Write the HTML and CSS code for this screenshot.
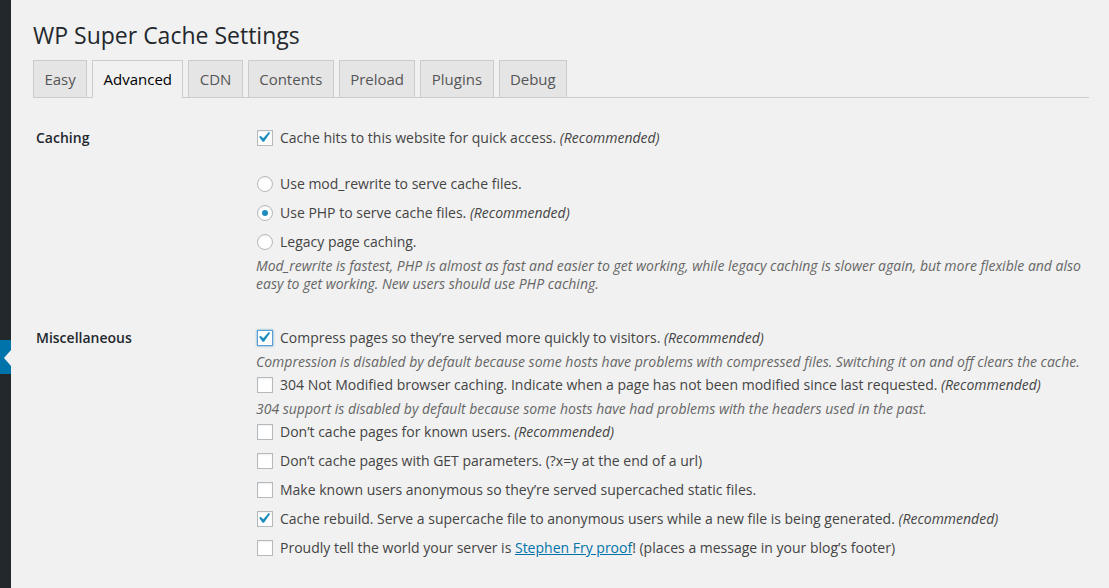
FILE: index.html
```html
<!DOCTYPE html>
<html lang="en">
<head>
  <meta charset="UTF-8">
  <meta name="viewport" content="width=device-width, initial-scale=1.0">
  <title>WP Super Cache Settings</title>
  <link rel="stylesheet" href="styles.css">
</head>
<body>

  <div class="admin">
    <!-- Admin menu edge -->
    <div class="sidebar">
      <div class="menu-current"></div>
    </div>

    <div class="wrap">
      <h1>WP Super Cache Settings</h1>

      <!-- Settings Tabs -->
      <nav class="nav-tabs">
        <a class="nav-tab" href="#">Easy</a>
        <a class="nav-tab active" href="#">Advanced</a>
        <a class="nav-tab" href="#">CDN</a>
        <a class="nav-tab" href="#">Contents</a>
        <a class="nav-tab" href="#">Preload</a>
        <a class="nav-tab" href="#">Plugins</a>
        <a class="nav-tab" href="#">Debug</a>
      </nav>

      <form class="settings">

        <!-- Caching -->
        <div class="setting-row">
          <div class="setting-label">Caching</div>
          <div class="setting-field">
            <label class="option">
              <span class="box"><svg viewBox="3.7 3 15.24 15.24"><path d="M14.83 4.89l1.34.94-5.81 8.38H9.02L5.78 9.67l1.34-1.25 2.570 2.4z"/></svg></span>
              <span>Cache hits to this website for quick access. <em>(Recommended)</em></span>
            </label>
            <label class="option spaced">
              <span class="box radio"></span>
              <span>Use mod_rewrite to serve cache files.</span>
            </label>
            <label class="option">
              <span class="box radio checked"></span>
              <span>Use PHP to serve cache files. <em>(Recommended)</em></span>
            </label>
            <label class="option">
              <span class="box radio"></span>
              <span>Legacy page caching.</span>
            </label>
            <p class="desc">Mod_rewrite is fastest, PHP is almost as fast and easier to get working, while legacy caching is slower again, but more flexible and also easy to get working. New users should use PHP caching.</p>
          </div>
        </div>

        <!-- Miscellaneous -->
        <div class="setting-row">
          <div class="setting-label">Miscellaneous</div>
          <div class="setting-field">
            <label class="option">
              <span class="box focus"><svg viewBox="3.7 3 15.24 15.24"><path d="M14.83 4.89l1.34.94-5.81 8.38H9.02L5.78 9.67l1.34-1.25 2.57 2.4z"/></svg></span>
              <span>Compress pages so they’re served more quickly to visitors. <em>(Recommended)</em></span>
            </label>
            <p class="desc">Compression is disabled by default because some hosts have problems with compressed files. Switching it on and off clears the cache.</p>
            <label class="option">
              <span class="box"></span>
              <span>304 Not Modified browser caching. Indicate when a page has not been modified since last requested. <em>(Recommended)</em></span>
            </label>
            <p class="desc">304 support is disabled by default because some hosts have had problems with the headers used in the past.</p>
            <label class="option">
              <span class="box"></span>
              <span>Don’t cache pages for known users. <em>(Recommended)</em></span>
            </label>
            <label class="option">
              <span class="box"></span>
              <span>Don’t cache pages with GET parameters. (?x=y at the end of a url)</span>
            </label>
            <label class="option">
              <span class="box"></span>
              <span>Make known users anonymous so they’re served supercached static files.</span>
            </label>
            <label class="option">
              <span class="box"><svg viewBox="3.7 3 15.24 15.24"><path d="M14.83 4.89l1.34.94-5.81 8.38H9.02L5.78 9.67l1.34-1.25 2.57 2.4z"/></svg></span>
              <span>Cache rebuild. Serve a supercache file to anonymous users while a new file is being generated. <em>(Recommended)</em></span>
            </label>
            <label class="option">
              <span class="box"></span>
              <span>Proudly tell the world your server is <a href="#">Stephen Fry proof</a>! (places a message in your blog’s footer)</span>
            </label>
          </div>
        </div>

      </form>
    </div>
  </div>

</body>
</html>
```

FILE: styles.css
```css
body {
  margin: 0;
  padding: 0;
  background: #f1f1f1;
  font-family: 'Open Sans', sans-serif;
  font-size: 14px;
  color: #444;
}

.admin {
  display: flex;
  min-height: 588px;
}

.sidebar {
  width: 11px;
  flex-shrink: 0;
  background: #23282d;
}

.menu-current {
  position: relative;
  margin-top: 340px;
  height: 34px;
  background: #0073aa;
}

.menu-current::after {
  content: "";
  position: absolute;
  right: 0;
  top: 10px;
  width: 0;
  height: 0;
  border-style: solid;
  border-width: 8px 7px 8px 0;
  border-color: transparent #f1f1f1 transparent transparent;
}

.wrap {
  flex: 1;
  padding: 21px 20px 0 22px;
}

h1 {
  margin: 0 0 10px;
  font-size: 23px;
  font-weight: 400;
  line-height: 29px;
  color: #23282d;
}

.nav-tabs {
  display: flex;
  align-items: flex-end;
  gap: 5px;
  border-bottom: 1px solid #ccc;
}

.nav-tab {
  padding: 6px 10.4px;
  border: 1px solid #ccc;
  border-bottom: none;
  background: #e5e5e5;
  color: #555;
  font-size: 15px;
  line-height: 24px;
  text-decoration: none;
}

.nav-tab.active {
  background: #f1f1f1;
  color: #000;
  padding-bottom: 7px;
  margin-bottom: -1px;
}

.settings {
  margin-top: 11px;
  padding-left: 3px;
}

.setting-row {
  display: grid;
  grid-template-columns: 210px 1fr;
  padding: 19px 0 16px;
}

.setting-label {
  font-weight: 600;
  color: #23282d;
  line-height: 20px;
}

.setting-field {
  display: flex;
  flex-direction: column;
  align-items: flex-start;
  padding-left: 10px;
}

.option {
  display: flex;
  align-items: center;
  gap: 7px;
  line-height: 20px;
  margin-bottom: 9px;
}

.option.spaced {
  margin-top: 17px;
}

.option em {
  font-style: italic;
}

.box {
  flex-shrink: 0;
  box-sizing: border-box;
  width: 16px;
  height: 16px;
  margin-left: 1px;
  border: 1px solid #b4b9be;
  background: #fff;
  box-shadow: inset 0 1px 2px rgba(0, 0, 0, 0.07);
  display: flex;
  align-items: center;
  justify-content: center;
}

.box svg {
  width: 16px;
  height: 16px;
  margin: -1px;
  fill: #1e8cbe;
}

.box.focus {
  border-color: #5b9dd9;
  box-shadow: 0 0 2px rgba(30, 140, 190, 0.8);
}

.box.radio {
  border-radius: 50%;
}

.box.radio.checked::before {
  content: "";
  width: 6px;
  height: 6px;
  border-radius: 50%;
  background: #1e8cbe;
}

.desc {
  margin: -4px 0 4px;
  font-style: italic;
  color: #666;
  line-height: 18px;
}

.setting-field > :last-child {
  margin-bottom: 0;
}

.option a {
  color: #0073aa;
  text-decoration: underline;
}
```
